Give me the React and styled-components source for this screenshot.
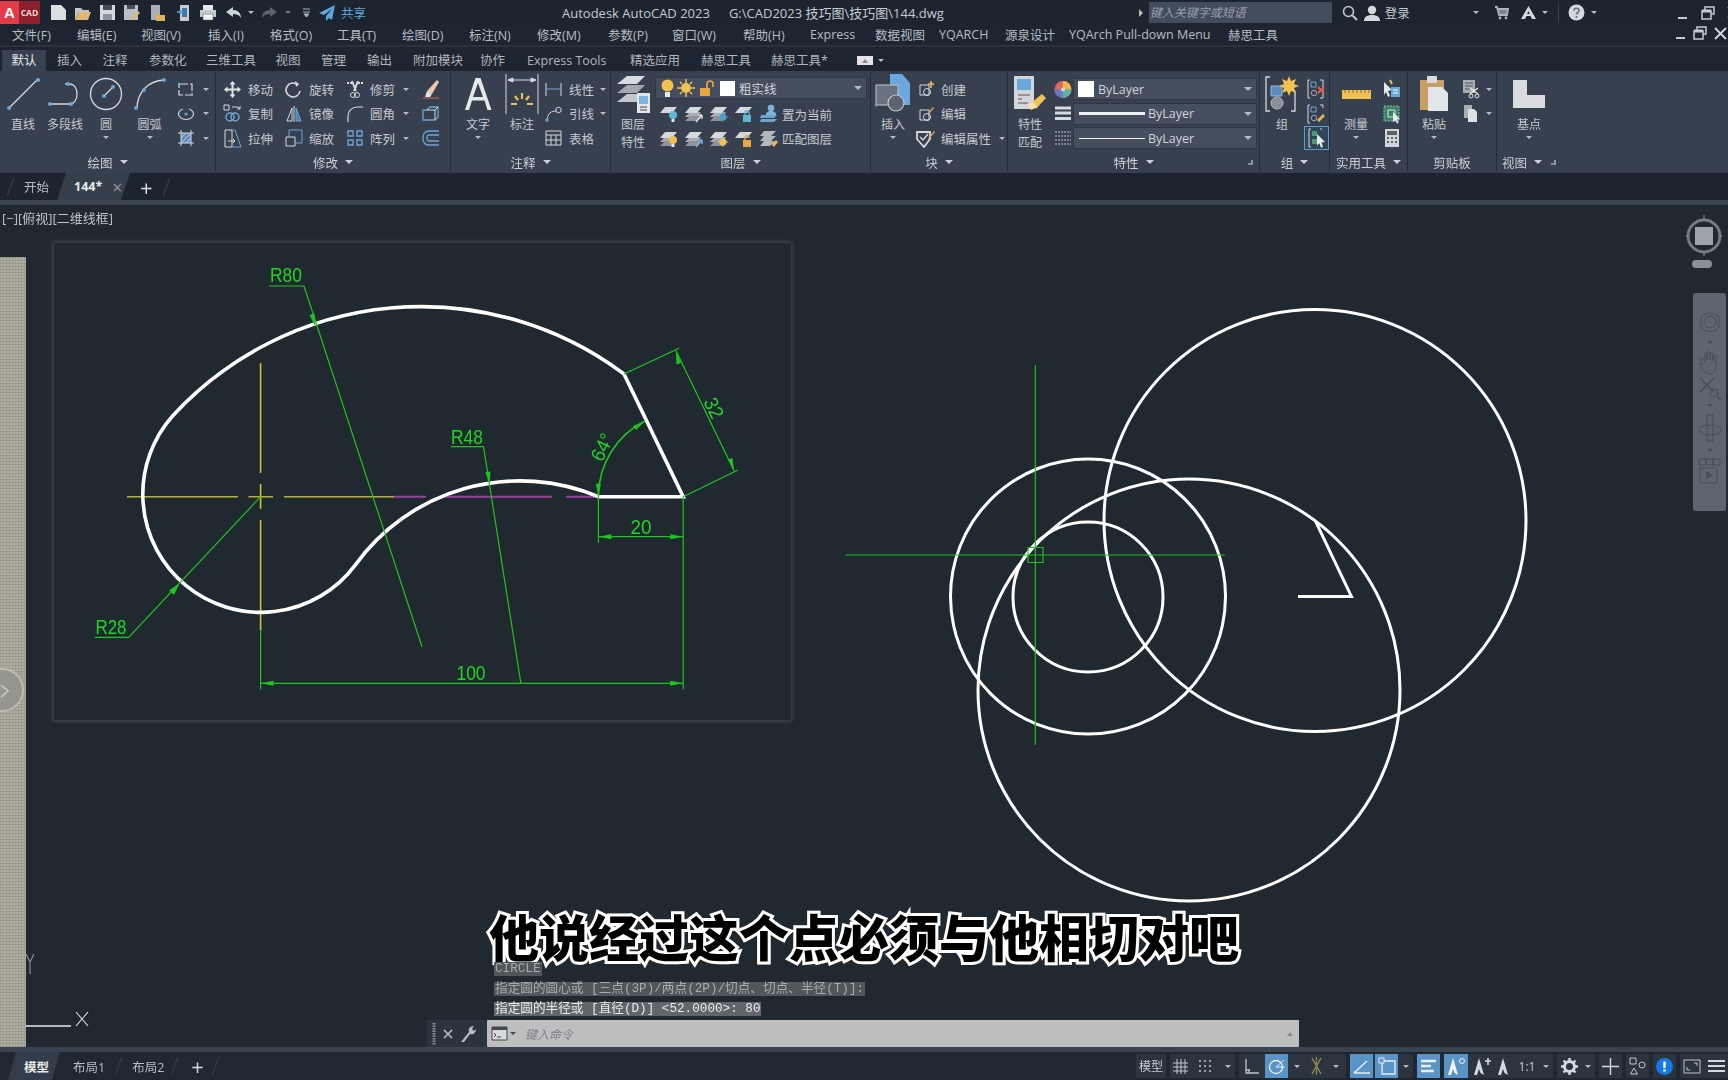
import React from 'react';
import styled, { createGlobalStyle } from 'styled-components';

const GlobalStyle = createGlobalStyle`
  html, body { margin: 0; padding: 0; background: #212930; }
  * { box-sizing: border-box; }
  #root { width: 1728px; height: 1080px; overflow: hidden; }
`;

const UI_FONT = `"Open Sans", "Noto Sans CJK SC", sans-serif`;
const W = '#d6d9dd';
const G = '#9ea4ab';
const B = '#6ea6d6';
const Y = '#efc056';

const Shell = styled.div`
  width: 1728px;
  height: 1080px;
  display: flex;
  flex-direction: column;
  background: #1d2530;
  color: #c6cad0;
  font-family: ${UI_FONT};
  font-size: 12px;
  filter: blur(0.4px);
`;

const Glyph = styled.svg`
  display: block;
  flex: none;
`;

const ico = (w, h, body, fill = 'none') => () => (
  <Glyph width={w} height={h} viewBox={`0 0 ${w} ${h}`} fill={fill}>
    {body}
  </Glyph>
);

/* ---------- title bar ---------- */
const TitleBar = styled.div`
  height: 25px;
  display: flex;
  align-items: center;
  position: relative;
  background: #1c2430;
`;
const Logo = styled.div`
  width: 40px;
  height: 23px;
  flex: none;
  display: flex;
  align-items: center;
  background: #8e1f2b;
  border-radius: 2px 0 0 2px;
`;
const LogoA = styled.span`
  width: 19px;
  height: 23px;
  line-height: 23px;
  text-align: center;
  background: #e23a48;
  color: #fff;
  font-size: 15px;
  font-weight: 700;
  font-family: "Liberation Sans", sans-serif;
`;
const LogoCad = styled.span`
  flex: 1;
  text-align: center;
  color: #f0d5d5;
  font-size: 8.5px;
  font-weight: 700;
`;
const Quick = styled.div`
  display: flex;
  flex: none;
  align-items: center;
  margin-left: ${(p) => p.$ml ?? 0}px;
`;
const ShareText = styled.span`
  margin-left: 5px;
  color: #5ea4d8;
  font-size: 12.5px;
  white-space: nowrap;
`;
const AppTitle = styled.span`
  flex: none;
  margin-left: ${(p) => p.$ml}px;
  font-size: 13px;
  color: #c6cad0;
  white-space: nowrap;
`;
const SearchArrow = styled.span`
  flex: none;
  width: 0;
  height: 0;
  margin-left: ${(p) => p.$ml}px;
  border-top: 4px solid transparent;
  border-bottom: 4px solid transparent;
  border-left: 4px solid #b8bcc2;
`;
const SearchBox = styled.div`
  flex: none;
  width: 183px;
  height: 21px;
  margin-left: 6px;
  padding-left: 1px;
  background: #424c5b;
  color: #97a0ab;
  font-size: 12px;
  font-style: italic;
  line-height: 21px;
  white-space: nowrap;
`;
const Login = styled.span`
  flex: none;
  margin-left: 4px;
  font-size: 12.5px;
  color: #c6cad0;
  white-space: nowrap;
`;
const Sep = styled.span`
  flex: none;
  width: 1px;
  height: 20px;
  background: #3b4450;
  margin-left: ${(p) => p.$ml}px;
`;
const Caret = styled.span`
  display: inline-block;
  flex: none;
  width: 0;
  height: 0;
  border-left: ${(p) => p.$s ?? 3}px solid transparent;
  border-right: ${(p) => p.$s ?? 3}px solid transparent;
  border-top: ${(p) => p.$s ?? 3}px solid ${(p) => p.$c ?? '#b8bcc2'};
  margin-left: ${(p) => p.$ml ?? 0}px;
`;
const CaretUp = styled(Caret)`
  border-top: none;
  border-bottom: 4px solid #8a8a8a;
`;
const NavCaret = styled(Caret)`
  margin: ${(p) => p.$m};
`;

/* ---------- menu + tabs ---------- */
const MenuBar = styled.div`
  height: 22px;
  display: flex;
  align-items: center;
  position: relative;
  padding-left: 12px;
  padding-bottom: 2px;
  border-bottom: 2px solid #2a323d;
`;
const MenuItem = styled.span`
  width: ${(p) => p.$w}px;
  flex: none;
  white-space: nowrap;
  color: #b8bcc3;
  font-size: 12.5px;
`;
const DocControls = styled.div`
  position: absolute;
  right: 1px;
  top: 1px;
  display: flex;
  align-items: center;
  gap: 7px;
`;
const TabStrip = styled.div`
  height: 24px;
  display: flex;
  align-items: flex-end;
  padding-left: 2px;
`;
const RibbonTab = styled.div`
  width: ${(p) => p.$w}px;
  flex: none;
  height: 21px;
  line-height: 21px;
  text-align: ${(p) => (p.$active ? 'center' : 'left')};
  background: ${(p) => (p.$active ? '#37414f' : 'transparent')};
  color: ${(p) => (p.$active ? '#e6e8ea' : '#b0b5bc')};
  font-size: 12.5px;
  white-space: nowrap;
  margin-right: ${(p) => (p.$active ? 11 : 0)}px;
`;
const MiniBox = styled.span`
  width: 16px;
  height: 9px;
  flex: none;
  background: #e3e5e8;
  margin-bottom: 6px;
  display: flex;
  align-items: center;
  justify-content: center;
`;
const TabCaret = styled(Caret)`
  margin-bottom: 9px;
  margin-left: 5px;
`;

/* ---------- ribbon ---------- */
const Ribbon = styled.div`
  height: 102px;
  display: flex;
  background: #37404e;
`;
const Panel = styled.section`
  width: ${(p) => (p.$w ? `${p.$w}px` : 'auto')};
  flex: ${(p) => (p.$w ? 'none' : 1)};
  display: flex;
  flex-direction: column;
  border-right: ${(p) => (p.$last ? 'none' : '1px solid #242c37')};
  margin: 1px 0;
`;
const PanelBody = styled.div`
  height: 80px;
  display: flex;
`;
const PanelFoot = styled.div`
  height: 20px;
  display: flex;
  align-items: center;
  justify-content: ${(p) => (p.$left ? 'flex-start' : 'center')};
  padding-left: ${(p) => p.$pl ?? 0}px;
  position: relative;
  font-size: 12.5px;
  color: #cdd0d5;
`;
const Launcher = styled.span`
  position: absolute;
  right: ${(p) => p.$r ?? 6}px;
  top: 8px;
  width: 5px;
  height: 5px;
  border-right: 2px solid #8d939a;
  border-bottom: 2px solid #8d939a;
`;
const LargeTool = styled.div`
  width: ${(p) => p.$w}px;
  margin-left: ${(p) => p.$ml ?? 0}px;
  flex: none;
  display: flex;
  flex-direction: column;
  align-items: center;
`;
const IconSlot = styled.div`
  height: 44px;
  display: flex;
  align-items: center;
  justify-content: center;
`;
const ToolLabel = styled.div`
  height: ${(p) => p.$h ?? 17}px;
  line-height: ${(p) => p.$h ?? 17}px;
  font-size: 12px;
  color: #c6cad0;
  white-space: nowrap;
`;
const ToolCaret = styled(Caret)`
  margin-top: 3px;
`;
const SmallCol = styled.div`
  display: flex;
  flex-direction: column;
  padding-top: 5px;
  margin-left: ${(p) => p.$ml ?? 0}px;
  width: ${(p) => (p.$w ? `${p.$w}px` : 'auto')};
`;
const SmallRow = styled.div`
  height: 24.5px;
  display: flex;
  align-items: center;
  gap: ${(p) => p.$gap ?? 0}px;
  padding-left: ${(p) => p.$pl ?? 0}px;
  white-space: nowrap;
`;
const IconCell = styled.span`
  width: ${(p) => p.$w ?? 22}px;
  height: ${(p) => p.$h ?? 22}px;
  flex: none;
  display: flex;
  align-items: center;
  justify-content: center;
  border: ${(p) => (p.$on ? '1px solid #5f9ad0' : 'none')};
  background: ${(p) => (p.$on ? '#2f4658' : 'transparent')};
`;
const SmallLabel = styled.span`
  margin-left: ${(p) => p.$ml ?? 5}px;
  font-size: 12.5px;
  color: #c6cad0;
`;
const Combo = styled.div`
  width: ${(p) => p.$w}px;
  height: 22px;
  flex: none;
  display: flex;
  align-items: center;
  background: #444e5e;
  border-radius: 1px;
  box-shadow: inset 0 0 0 1px #2f3743;
  padding: 0 5px;
  margin-bottom: ${(p) => p.$mb ?? 0}px;
  color: #d0d3d8;
  font-size: 12.5px;
`;
const Swatch = styled.span`
  width: ${(p) => p.$s ?? 15}px;
  height: ${(p) => p.$s ?? 15}px;
  margin-left: ${(p) => p.$ml ?? 0}px;
  background: #fff;
  flex: none;
`;
const LineSample = styled.span`
  width: 66px;
  height: ${(p) => p.$t}px;
  background: #f1f2f3;
  margin-left: 1px;
  flex: none;
`;
const ComboText = styled.span`
  margin-left: ${(p) => p.$ml ?? 4}px;
  flex: 1;
`;

/* ---------- doc tabs ---------- */
const DocTabs = styled.div`
  height: 27px;
  display: flex;
  align-items: center;
  position: relative;
  background: #1c2430;
`;
const Slash = styled.span`
  width: 1px;
  height: 18px;
  flex: none;
  background: #3a434f;
  transform: skewX(-20deg);
  margin-left: ${(p) => p.$ml}px;
`;
const DocLabel = styled.span`
  margin-left: ${(p) => p.$ml}px;
  color: ${(p) => p.$c ?? '#b8bcc3'};
  font-size: 12.5px;
  font-weight: ${(p) => p.$b ?? 400};
`;
const ActiveDoc = styled.div`
  width: ${(p) => p.$w}px;
  height: 27px;
  margin-left: ${(p) => p.$ml}px;
  padding-left: ${(p) => p.$pl}px;
  background: #353e4b;
  clip-path: polygon(9px 0, 100% 0, calc(100% - 9px) 100%, 0 100%);
  display: flex;
  align-items: center;
  color: #e6e8ea;
  font-weight: 700;
  font-size: 12.5px;
`;
const CloseX = styled.span`
  margin-left: 10px;
  color: #8f959c;
  font-size: 18px;
  font-weight: 400;
`;
const PlusMark = styled.span`
  margin-left: ${(p) => p.$ml}px;
  color: #d6d9dd;
  font-size: 22px;
  line-height: 22px;
  font-weight: 400;
`;
const Divider = styled.div`
  height: 5px;
  background: #3a4450;
`;

/* ---------- canvas ---------- */
const Canvas = styled.div`
  flex: 1;
  position: relative;
  overflow: hidden;
  background: #212930;
`;
const ViewLabel = styled.div`
  position: absolute;
  left: 2px;
  top: 3px;
  font-size: 13px;
  color: #c0c4ca;
`;
const PhotoStrip = styled.div`
  position: absolute;
  left: 0;
  top: 52px;
  bottom: 0;
  width: 26px;
  background:
    repeating-linear-gradient(0deg, rgba(90, 88, 75, 0.18) 0 1px, transparent 1px 3px),
    repeating-linear-gradient(90deg, rgba(90, 88, 75, 0.14) 0 1px, transparent 1px 3px),
    #aeaca0;
`;
const Knob = styled.div`
  position: absolute;
  left: -20px;
  top: 463px;
  width: 44px;
  height: 44px;
  border-radius: 50%;
  background: #97968c;
  border: 2px solid #bdbcb1;
`;
const KnobMark = styled.svg`
  position: absolute;
  left: 0;
  top: 479px;
`;
const Sheet = styled.div`
  position: absolute;
  left: 54px;
  top: 38px;
  width: 737px;
  height: 477px;
  box-shadow: 0 0 4px 1px #444d58;
`;
const Drawing = styled.svg`
  position: absolute;
  left: 0;
  top: 0;
`;
const DimText = styled.text`
  font-family: "Liberation Sans", sans-serif;
  font-size: 20px;
  fill: #22d422;
  text-anchor: middle;
  dominant-baseline: central;
`;
const ViewCube = styled.div`
  position: absolute;
  left: 1685px;
  top: 8px;
  opacity: 0.75;
`;
const NavPill = styled.div`
  position: absolute;
  left: 1692px;
  top: 55px;
  width: 20px;
  height: 8px;
  border-radius: 4px;
  background: #8a9097;
`;
const NavBar = styled.div`
  position: absolute;
  left: 1693px;
  top: 88px;
  width: 33px;
  height: 218px;
  border-radius: 3px;
  background: #5d656e;
  display: flex;
  flex-direction: column;
  align-items: center;
  padding-top: 18px;
`;
const Subtitle = styled.div`
  position: absolute;
  left: 0;
  right: 0;
  top: 694px;
  text-align: center;
  font-family: "Noto Sans CJK SC", sans-serif;
  font-size: 50px;
  line-height: 72px;
  font-weight: 900;
  color: #000;
  -webkit-text-stroke: 6px #fff;
  paint-order: stroke fill;
  white-space: nowrap;
`;
const History = styled.div`
  position: absolute;
  left: 494px;
  top: 757px;
  display: flex;
  flex-direction: column;
  align-items: flex-start;
  font-family: "Liberation Mono", "Noto Sans CJK SC", monospace;
  font-size: 12.65px;
`;
const HistoryLine = styled.span`
  height: ${(p) => p.$h ?? 14}px;
  line-height: ${(p) => p.$h ?? 14}px;
  margin-bottom: ${(p) => p.$mb ?? 6}px;
  padding: 0 1px;
  background: ${(p) => (p.$dim ? '#50565a' : '#62666b')};
  color: ${(p) => (p.$dim ? '#a8acae' : '#e8e9ea')};
  white-space: pre;
`;
const CommandWrap = styled.div`
  position: absolute;
  left: 427px;
  top: 815px;
  width: 872px;
  height: 27px;
  display: flex;
  background: #2b333e;
`;
const CommandGrip = styled.div`
  width: 60px;
  display: flex;
  align-items: center;
  padding-left: 5px;
  gap: 7px;
`;
const CommandField = styled.div`
  flex: 1;
  display: flex;
  align-items: center;
  background: #bdbec0;
  padding: 0 6px 0 4px;
  border-radius: 1px;
  color: #7e8185;
  font-style: italic;
  font-size: 12px;
`;
const Hint = styled.span`
  margin-left: 9px;
  flex: 1;
`;

/* ---------- status bar ---------- */
const StatusBar = styled.div`
  height: 28px;
  display: flex;
  align-items: center;
  justify-content: space-between;
  background: #1f2732;
`;
const LayoutTabs = styled.div`
  display: flex;
  align-items: center;
  height: 28px;
`;
const ModelTab = styled.div`
  width: 52px;
  height: 28px;
  margin-left: 8px;
  padding-left: 16px;
  background: #333c49;
  clip-path: polygon(8px 0, 100% 0, calc(100% - 8px) 100%, 0 100%);
  display: flex;
  align-items: center;
  color: #e6e8ea;
  font-size: 12.5px;
  font-weight: 700;
`;
const StatusTools = styled.div`
  display: flex;
  height: 24px;
  gap: 4px;
`;
const StatusGroup = styled.div`
  display: flex;
  align-items: center;
  background: #2c3440;
`;
const StatusCell = styled.span`
  width: ${(p) => p.$w ?? 23}px;
  height: 24px;
  flex: none;
  display: flex;
  align-items: center;
  justify-content: center;
  margin-left: ${(p) => p.$ml ?? 0}px;
  background: ${(p) => (p.$on ? '#5a94c6' : 'transparent')};
  color: #c6cad0;
  font-size: 12px;
`;

/* ---------- icons ---------- */
const dot = (x, y, r = 2) => <circle cx={x} cy={y} r={r} fill={B} />;
const IDoc = ico(17, 17, <path d="M1 1h10l5 5v10H1z" fill="#dcdfe2" />);
const IFolder = ico(18, 16, <><path d="M1 3h6l2 2h6v2H5L1 15z" fill="#c2c6cb" /><path d="M5 7h12l-3 8H1z" fill="#e2b878" /></>);
const ISave = ico(17, 17, <><path d="M1 1h15v15H1z" fill="#d5d8dc" /><path d="M4 1h9v5H4z" fill="#434b57" /><path d="M4 10h9v6H4z" fill="#8c929a" /></>);
const ISaveAs = ico(18, 17, <><path d="M1 1h14v15H1z" fill="#b9bec4" /><path d="M4 1h8v4H4z" fill="#434b57" /><path d="M8 15l7-8 2 2-7 7z" fill="#e4b55f" /></>);
const IDocFolder = ico(17, 18, <><path d="M2 1h9v15H2z" fill="#aab0b7" /><path d="M7 10h3l1 1h5v6H7z" fill="#e2b05a" /></>);
const IPhone = ico(15, 18, <><path d="M4 1h9v16H4z" fill="#c8ccd1" /><path d="M6 4h5v9H6z" fill="#3f78a8" /><path d="M1 8h5M4 6l2 2-2 2" stroke={B} strokeWidth="1.5" /></>);
const IPrint = ico(18, 17, <><path d="M4 1h10v5H4z" fill="#e4e6e9" /><path d="M1 6h16v7H1z" fill="#c5c9ce" /><path d="M4 10h10v6H4z" fill="#f1f2f3" stroke="#555" strokeWidth=".5" /></>);
const IUndo = ico(17, 13, <path d="M1 6l7-5v3c5 0 8 3 8 8-2-3-4-4-8-4v3z" fill="#cfd3d7" />);
const IRedo = ico(17, 13, <path d="M16 6L9 1v3C4 4 1 7 1 12c2-3 4-4 8-4v3z" fill="#5a6370" />);
const ILines = ico(9, 10, <path d="M1 1h7M1 4h7M2 6l2.5 3L7 6z" stroke="#aab0b6" fill="#aab0b6" />);
const IPlane = ico(17, 16, <path d="M16 0L0 8l5 2 8-6-6 7v5l3-3 3 2z" fill="#5ea4d8" />);
const ISearchBtn = ico(16, 16, <><circle cx="6.5" cy="6.5" r="5" stroke="#c2c6cb" strokeWidth="1.6" /><path d="M10.5 10.5L15 15" stroke="#c2c6cb" strokeWidth="2" /></>);
const IUser = ico(18, 16, <><circle cx="9" cy="5" r="4.2" fill="#d5d8dc" /><path d="M1 16c0-4 3-6 8-6s8 2 8 6z" fill="#d5d8dc" /></>);
const ICart = ico(15, 15, <><path d="M1 2h2l2 8h8l1-6H4" stroke="#aeb3b9" strokeWidth="1.8" fill="#7d848c" /><circle cx="6" cy="13" r="1.4" fill="#aeb3b9" /><circle cx="12" cy="13" r="1.4" fill="#aeb3b9" /></>);
const IAuto = ico(17, 15, <path d="M8.5 1L1 14h4l1.5-3h4L12 14h4zM8.5 6l1.2 3H7.2z" fill="#d5d8dc" />);
const IHelp = () => (
  <Glyph width={17} height={17} viewBox="0 0 17 17">
    <circle cx="8.5" cy="8.5" r="8" fill="#d5d8dc" />
    <path d="M6 6.5c0-3 5-3 5 0 0 2-2.5 2-2.5 4M8.5 12v2" stroke="#6a7079" strokeWidth="1.7" fill="none" />
  </Glyph>
);
const IMin = ico(11, 12, <path d="M1 11h9" stroke="#c6cad0" strokeWidth="2" />);
const IRestore = ico(14, 14, <><path d="M4 4V1h9v7h-3" stroke="#c6cad0" strokeWidth="1.5" /><path d="M1 5h9v8H1z" stroke="#c6cad0" strokeWidth="1.5" /><path d="M1 5h9" stroke="#c6cad0" strokeWidth="3" /></>);
const IClose = ico(13, 13, <path d="M1 1l11 11M12 1L1 12" stroke="#d6d9dd" strokeWidth="1.8" />);

const ILine = ico(36, 36, <><path d="M4 32L33 3" stroke={W} strokeWidth="1.3" />{dot(4, 32)}{dot(33, 4)}</>);
const IPline = ico(42, 28, <><path d="M7 24h21M21 4h4c5 0 8 4 8 10s-3 10-8 10" stroke={W} strokeWidth="1.3" />{dot(6, 24)}{dot(27, 24)}{dot(24, 4)}</>);
const ICircleTool = ico(36, 36, <><circle cx="18" cy="18" r="15.5" stroke={W} strokeWidth="1.3" /><path d="M16 20l8-8" stroke={W} strokeWidth="1.3" />{dot(16, 20)}{dot(25, 11)}</>);
const IArcTool = ico(34, 36, <><path d="M4 33C4 16 15 5 31 4" stroke={W} strokeWidth="1.3" />{dot(3, 32)}{dot(11, 14)}{dot(31, 4)}</>);
const IRect = ico(18, 15, <><path d="M2 2h13v11H2z" stroke={W} strokeDasharray="9 2" strokeWidth="1.2" />{dot(2, 2, 1.2)}{dot(15, 13, 1.2)}</>);
const IEllipse = ico(18, 14, <><ellipse cx="9" cy="7" rx="7.5" ry="5.5" stroke={W} strokeWidth="1.2" />{dot(9, 7, 1.6)}<path d="M6 1.5h6" stroke="#37404e" strokeWidth="2" /></>);
const IHatch = ico(18, 18, <><path d="M4 4h10v10H4z" fill="#5f8dc0" /><path d="M4 14L14 4M4 9l5-5M9 14l5-5" stroke="#b9cbe0" /><path d="M1 4h16M1 14h16M4 1v16M14 1v16" stroke={W} /></>);
const IMove = ico(19, 19, <path d="M9.5 1l3 3.5h-2v4h4v-2l3.5 3-3.5 3v-2h-4v4h2l-3 3.5-3-3.5h2v-4h-4v2L1 9.5l3.5-3v2h4v-4h-2z" fill="#e2e4e7" />);
const ICopy = ico(19, 19, <><path d="M1 1h5v5H1z" stroke={W} /><path d="M9 3h6l2 2M17 2v3h-3" stroke={W} /><circle cx="7" cy="13" r="4" stroke={B} strokeWidth="1.5" /><circle cx="12" cy="13" r="4" stroke={B} strokeWidth="1.5" /></>);
const IStretch = ico(18, 19, <><path d="M1 1h7v17H1z" stroke={W} /><path d="M8 1h3l6 17H8" stroke={B} /><path d="M4 12h7M9 10l2 2-2 2" stroke={W} /></>);
const IRotate = ico(17, 19, <><path d="M13 5A7 7 0 1 0 15 11" stroke={W} strokeWidth="1.6" /><path d="M10 1l4 3-3 3z" fill={W} /></>);
const IMirror = ico(18, 18, <><path d="M9 1v16" stroke={W} /><path d="M7 3L2 16h5z" stroke={W} /><path d="M11 3l5 13h-5z" stroke={B} fill="#4f7fa8" /></>);
const IScale = ico(18, 18, <><path d="M1 8h9v9H1z" stroke={W} /><path d="M4 8V1h13v13h-7" stroke={B} /></>);
const ITrim = ico(18, 19, <><path d="M1 3h5M12 3h5" stroke={W} strokeDasharray="2 1" strokeWidth="2" /><path d="M6 1l4 10M12 1L8 11" stroke={W} strokeWidth="2" /><circle cx="7" cy="15" r="2.5" stroke={W} /><circle cx="11" cy="15" r="2.5" stroke={W} /></>);
const IFillet = ico(18, 18, <path d="M2 17V11C2 6 6 2 11 2h6" stroke={W} strokeWidth="1.2" />);
const IArray = ico(18, 18, <path d="M2 2h5v5H2zM11 2h5v5h-5zM2 11h5v5H2zM11 11h5v5h-5z" stroke={B} strokeWidth="1.3" />);
const IErase = ico(18, 20, <><path d="M15 1l2 2-7 12-5-3z" fill="#f0c9a8" /><path d="M5 12l5 3-2 3H3z" fill="#e2e4e7" /><path d="M1 19h16" stroke="#d96b5a" /></>);
const IExplode = ico(18, 18, <><path d="M5 5l3-3h8v10l-3 3H1V5z" stroke={B} strokeWidth="1.3" /><path d="M5 5h8v10M13 5l3-3" stroke={W} /></>);
const IOffset = ico(18, 16, <path d="M17 1H7C3 1 1 4 1 8s2 7 6 7h10M17 5H7C5 5 5 6 5 8s0 3 2 3h10" stroke={B} strokeWidth="1.3" />);
const ITextA = ico(30, 34, <path d="M12.5 1h5l11 32h-4l-3-9.5H9L6 33H2zM15 6l-5 14h10z" fill="#e6e8ea" />);
const IDim = ico(34, 42, <><path d="M1 1v40M33 1v40" stroke={W} /><path d="M3 7h28M3 7l5-2v4zM31 7l-5-2v4z" stroke={W} fill={W} /><path d="M17 20v6M10 23l3 4M24 23l-3 4M6 31h6M22 31h6" stroke={Y} strokeWidth="2.2" /></>);
const ILinear = ico(17, 15, <><path d="M1 1v13M16 1v13" stroke={W} /><path d="M2 7h13" stroke={B} /></>);
const ILeader = ico(18, 16, <><path d="M2 14c1-7 4-9 9-9" stroke={W} /><circle cx="13.5" cy="4" r="2.7" stroke={W} />{dot(2, 14, 1.7)}</>);
const ITable = ico(17, 16, <path d="M1 1h15v14H1zM1 5h15M1 10h15M6 5v10M11 5v10" stroke={W} />);

const ILayers = ico(36, 38, <>
  <path d="M12 1h18l-8 8H2z" fill="#d8dadd" />
  <path d="M12 10h18l-8 8H2z" fill="#a5a9af" />
  <path d="M12 19h18l-8 8H2z" fill="#c4c7cb" />
  <path d="M22 18h13v20H22z" fill="#e3e5e8" />
  <path d="M24 21h9v8h-9z" fill="#7fb3dd" />
  <path d="M25 32h7M25 35h7" stroke="#444" />
</>);
const IBulb = ico(13, 19, <><circle cx="6.5" cy="6.5" r="6" fill="#f2c14f" /><path d="M4 13h5v5H4z" fill="#e8e8e8" /></>);
const ISun = ico(18, 18, <><circle cx="9" cy="9" r="5" fill="#f2c14f" /><path d="M9 0v4M9 14v4M0 9h4M14 9h4M3 3l2 2M13 13l2 2M15 3l-2 2M5 13l-2 2" stroke="#f2c14f" strokeWidth="1.5" /></>);
const ILockOpen = ico(15, 17, <><path d="M1 8h10v8H1z" fill="#e8a640" /><path d="M8 8V4c0-4 6-4 6 0v3" stroke="#e8a640" strokeWidth="1.7" /></>);

const layerChip = (overlay, n = 1) => ico(20, 20, <>
  {n > 1 && <path d="M6 8h11l-4 5H1z" fill="#a8acb1" />}
  {n > 1 && <path d="M6 12h11l-4 5H1z" fill="#8f949b" />}
  <path d="M6 3h12l-5 6H1z" fill="#d5d8dc" />
  {overlay}
</>);
const OBulb = <><circle cx="14" cy="11" r="4" fill="#5fb6d6" /><path d="M12.5 15h3v3h-3z" fill="#e8e8e8" /></>;
const OArrow = <path d="M12 18l6-7M18 11v4M18 11h-4" stroke="#dfe2e5" strokeWidth="1.4" />;
const OArrowB = <path d="M12 18l6-7M18 11v4M18 11h-4" stroke="#7fb3dd" strokeWidth="1.4" />;
const OSun = <><circle cx="14" cy="13" r="3.5" fill="#4f9fc0" /><path d="M14 8v10M9 13h10" stroke="#4f9fc0" /></>;
const OSunY = <><circle cx="14" cy="13" r="3.5" fill={Y} /><path d="M14 8v10M9 13h10" stroke={Y} /></>;
const OBulbY = <><circle cx="14" cy="11" r="4" fill={Y} /><path d="M12.5 15h3v3h-3z" fill="#e8e8e8" /></>;
const OLockB = <><path d="M9 11h8v7H9z" fill="#5fb6d6" /><path d="M11 11V9c0-3 4-3 4 0v2" stroke="#5fb6d6" strokeWidth="1.3" /></>;
const OLockY = <><path d="M9 11h8v7H9z" fill="#e8a640" /><path d="M11 11V9c0-3 4-3 4 0" stroke="#e8a640" strokeWidth="1.3" /></>;
const L1 = layerChip(OBulb);
const L2 = layerChip(OArrow, 2);
const L3 = layerChip(OSun, 2);
const L4 = layerChip(OLockB);
const L5 = layerChip(OBulbY, 2);
const L6 = layerChip(OArrowB, 2);
const L7 = layerChip(OSunY, 2);
const L8 = layerChip(OLockY);
const ICurrent = ico(20, 20, <><circle cx="12" cy="4" r="3.3" fill="#7fb3dd" /><path d="M7 11c0-3 2-4 5-4s5 1 5 4z" fill="#7fb3dd" /><path d="M2 11h16l-3 3H1zM2 15h16l-3 3H1z" fill="#6fa4cf" /></>);
const IMatchLayer = ico(20, 20, <><path d="M5 2h12l-5 5H1zM5 7h12l-5 5H1zM5 12h10l-4 5H1z" fill="#b3b7bc" /><path d="M12 15l5-4 2 2-4 5z" fill="#e4b55f" /></>);

const IInsert = ico(36, 42, <>
  <path d="M15 1h12l8 9v22H15z" fill="#6ba8e0" />
  <path d="M1 12h22v20H1z" fill="#6c7380" stroke="#c2c6cb" />
  <circle cx="21" cy="30" r="8" fill="#5d6470" stroke="#c2c6cb" strokeWidth="1.2" />
  {dot(1, 32, 1.5)}
</>);
const IBlockNew = ico(18, 18, <><path d="M3 5h9v10H3z" stroke={W} /><circle cx="10" cy="12" r="3.5" stroke={W} /><path d="M14 1v7M11 4h6" stroke={Y} strokeWidth="1.5" /></>);
const IBlockEdit = ico(18, 18, <><path d="M3 5h9v10H3z" stroke={W} /><circle cx="10" cy="12" r="3.5" stroke={W} /><path d="M11 8l5-6 1 1-5 6z" fill="#e4a860" /></>);
const IAttr = ico(20, 19, <><path d="M1 3h13v7l-6 8-7-8z" stroke={W} strokeWidth="1.8" /><path d="M4 8l3 3 5-6" stroke={W} strokeWidth="1.5" /><path d="M12 9l6-7 1 1-6 7z" fill="#e4a860" /></>);
const IMatch = ico(34, 38, <>
  <path d="M1 1h20v33H1z" fill="#d2d5d9" />
  <path d="M4 4h14v11H4z" fill="#6aa8dc" />
  <path d="M5 20h12M5 24h4M5 28h10" stroke="#555" />
  <path d="M18 28l11-9 4 4-10 11z" fill="#f0c25a" />
  <path d="M15 30l5-3 4 5-6 3z" fill="#f3e2b0" />
</>);
const IWheel = () => (
  <Glyph width={18} height={19} viewBox="0 0 18 19">
    <circle cx="9" cy="9.5" r="8.5" fill="#e0675a" />
    <path d="M9 9.5V1a8.5 8.5 0 0 1 8.5 8.5z" fill="#f0b64a" />
    <path d="M9 9.5h8.5A8.5 8.5 0 0 1 9 18z" fill="#5cb4a6" />
    <path d="M9 9.5V18A8.5 8.5 0 0 1 .5 9.5z" fill="#6a78c8" />
    <circle cx="9" cy="9.5" r="2" fill="#d8d8d8" />
  </Glyph>
);
const IWeight = ico(16, 16, <path d="M0 2h16M0 7h16M0 12.5h16" stroke="#d5d8dc" strokeWidth="3" />);
const IDash = ico(16, 16, <path d="M0 2h16M0 6h16M0 10h16M0 14h16" stroke="#c2c6cb" strokeDasharray="2 1" />);
const IGroup = ico(34, 38, <>
  <path d="M5 2H1v34h4M26 36h4V16" stroke={W} strokeWidth="1.3" />
  <path d="M6 11h11v10H6z" fill="#5a8dbe" stroke="#8ab8df" />
  <circle cx="12" cy="28" r="6" fill="#8b9097" stroke="#b5b9be" />
  <path d="M24 1l2 5 5-2-2 5 5 2-5 2 2 5-5-2-2 5-2-5-5 2 2-5-5-2 5-2-2-5 5 2z" fill="#f2c14f" />
</>);
const IUngroup = ico(18, 20, <><path d="M3 1H1v18h2M13 1h3v18h-3" stroke={W} /><path d="M4 3h5v5H4z" stroke={B} /><circle cx="7" cy="14" r="2.7" stroke={G} /><path d="M11 8l6 6M17 8l-6 6" stroke="#d85a5a" strokeWidth="2.2" /></>);
const IGroupEdit = ico(18, 20, <><path d="M3 1H1v18h2M13 1h3v3" stroke={W} /><path d="M4 3h5v5H4z" stroke={B} /><circle cx="7" cy="14" r="2.7" stroke={G} /><path d="M10 16l6-6 2 2-6 6z" fill="#e4b55f" /></>);
const IGroupSel = ico(18, 20, <><path d="M3 1H1v18h2M12 1h2" stroke={W} /><path d="M4 3h5v5H4z" fill="#4e9a78" /><path d="M4 11h5v5H4z" fill="#4e9a78" /><path d="M9 6l8 8-3.5.5L15 19l-2 .7-1.6-4.4L9 17.5z" fill="#e8eaec" /></>);
const IRuler = ico(31, 11, <><path d="M1 1h29v9H1z" fill="#efc056" /><path d="M4 1v3M8 1v3M12 1v3M16 1v3M20 1v3M24 1v3M28 1v3" stroke="#8a6a1e" /></>);
const IQuick = ico(18, 20, <><path d="M1 3l8 8-4 1 2 5-2 1-2-5-2 3z" fill="#e6e8ea" /><path d="M8 8h9v10H8z" fill="#6aa8dc" /><path d="M10 11h5M10 14h5" stroke="#fff" /><path d="M7 1l2 4" stroke={Y} strokeWidth="2" /></>);
const ISelectAll = ico(18, 20, <><path d="M1 2h15v15H1z" fill="#3e7f68" stroke="#6ec09b" strokeDasharray="2 1" /><path d="M5 6h7v7H5z" stroke="#cfe7dc" /><path d="M10 8l7 7-3 .5 1.5 3.5-1.5.7-1.5-3.5L10 18z" fill="#e8eaec" /></>);
const ICalc = ico(14, 18, <><path d="M0 0h14v18H0z" fill="#d2d5d9" /><path d="M2 2h10v4H2z" fill="#5a616b" /><path d="M2 8h2v2H2zM6 8h2v2H6zM10 8h2v2h-2zM2 12h2v2H2zM6 12h2v2H6zM10 12h2v2h-2z" fill="#5a616b" /></>);
const IPaste = ico(30, 38, <>
  <path d="M1 5h24v30H1z" fill="#c99f66" />
  <path d="M8 1h10v7H8z" fill="#d9dbdd" />
  <path d="M9 12h14l6 6v18H9z" fill="#e3e5e8" />
</>);
const ICut = ico(18, 20, <><path d="M1 1h12v13H1z" fill="#a8adb3" /><path d="M3 4h8M3 7h8M3 10h5" stroke="#555" /><path d="M8 9l8 6M16 9l-8 6" stroke="#e6e8ea" strokeWidth="1.3" /><circle cx="9" cy="17" r="2" stroke="#e6e8ea" /><circle cx="15" cy="17" r="2" stroke="#e6e8ea" /></>);
const ICopyClip = ico(15, 19, <><path d="M1 1h8v13H1z" fill="#a8adb3" /><path d="M5 5h6l3 3v10H5z" fill="#dfe1e4" /></>);
const IBase = ico(34, 30, <path d="M1 1h14v15h18v13H1z" fill="#dadcdf" />);

const ILOrtho = ico(16, 17, <path d="M2 1v14h13M5 15v-4M2 12h4" stroke="#c2c6cb" strokeWidth="1.3" />);
const IPolar = ico(18, 18, <><circle cx="8" cy="10" r="6.5" stroke="#e8eef4" strokeWidth="1.3" /><path d="M8 10l8-7M8 10h9" stroke="#e8eef4" /></>);
const IIso = ico(13, 18, <><path d="M2 1l9 16M11 1L2 17" stroke="#b9863f" strokeWidth="1.3" /><path d="M6.5 0v18" stroke="#5e9b5e" strokeWidth="1.3" /></>);
const IAngle = ico(18, 15, <path d="M1 14h16M1 14L14 2" stroke="#e8eef4" strokeWidth="1.5" />);
const IOsnap = ico(18, 18, <><path d="M4 4h13v13H4z" stroke="#e8eef4" strokeWidth="1.3" /><path d="M1 1h5v5H1z" fill="#5a94c6" stroke="#e8eef4" /></>);
const ILW = ico(17, 14, <path d="M1 2h15M1 7h10M1 12h13" stroke="#e8eef4" strokeWidth="2.6" />);
const IAnno = (fill, mark) => ico(19, 19, <><path d="M6 1l5 17-3.5-2L6 12l-2 6H1z" fill={fill} />{mark}</>);
const IAnno1 = IAnno('#eef2f6', <circle cx="15" cy="4" r="2.5" stroke="#eef2f6" />);
const IAnno2 = IAnno('#d5d8dc', <path d="M15 1v7M12 4h6" stroke="#d5d8dc" strokeWidth="1.6" />);
const IAnno3 = IAnno('#d5d8dc', null);
const IGrid = ico(15, 15, <path d="M4 0v15M8 0v15M12 0v15M0 4h15M0 8h15M0 12h15" stroke="#c2c6cb" />);
const IDots = ico(14, 14, <path d="M2 2h.01M7 2h.01M12 2h.01M2 7h.01M7 7h.01M12 7h.01M2 12h.01M7 12h.01M12 12h.01" stroke="#c2c6cb" strokeWidth="2" strokeLinecap="round" />);
const IGear = ico(17, 17, <><circle cx="8.5" cy="8.5" r="5" stroke="#d5d8dc" strokeWidth="3" /><path d="M8.5 0v3M8.5 14v3M0 8.5h3M14 8.5h3M2.5 2.5l2 2M12.5 12.5l2 2M14.5 2.5l-2 2M4.5 12.5l-2 2" stroke="#d5d8dc" strokeWidth="2.4" /></>);
const IPlus = ico(17, 17, <path d="M8.5 0v17M0 8.5h17" stroke="#d5d8dc" strokeWidth="1.4" />);
const IIsolate = ico(17, 18, <><path d="M1 1h6v6H1z" stroke="#c2c6cb" /><circle cx="13" cy="8" r="3" stroke="#c2c6cb" /><path d="M5 11l3.5 6h-7z" stroke="#c2c6cb" /></>);
const IInfo = () => (
  <Glyph width={17} height={17} viewBox="0 0 17 17">
    <circle cx="8.5" cy="8.5" r="8.5" fill="#1479e4" />
    <path d="M8.5 3.5v6.5M8.5 11.5v2" stroke="#fff" strokeWidth="2.4" />
  </Glyph>
);
const IExpand = ico(18, 15, <><path d="M1 1h16v13H1z" stroke="#c2c6cb" /><path d="M11 4h3v3M7 11H4V8" stroke="#c2c6cb" /></>);
const IMenu = ico(17, 14, <path d="M0 2h17M0 7h17M0 12h17" stroke="#d5d8dc" strokeWidth="1.8" />);
const IGrip = ico(4, 22, <path d="M2 0v22" stroke="#8a9097" strokeWidth="3" strokeDasharray="1.5 1" />);
const ICmdClose = ico(10, 10, <path d="M1 1l8 8M9 1L1 9" stroke="#b9bdc2" strokeWidth="1.6" />);
const IWrench = ico(16, 18, <path d="M1 17l8-10c-1-3 1-6 5-6l-2 3 2 2 2-2c0 4-3 6-6 5l-6 8z" fill="#b9bdc2" />);
const ICmdBox = ico(17, 15, <><path d="M1 1h15v13H1z" fill="#d8d9da" stroke="#44484d" /><path d="M1 1h15v3H1z" fill="#44484d" /><path d="M3 7l2 2-2 2M6 11h4" stroke="#44484d" /></>);

const IViewCube = () => (
  <Glyph width={38} height={44} viewBox="0 0 38 44" fill="none">
    <circle cx="19" cy="23" r="16" stroke="#8f959c" strokeWidth="3" />
    <path d="M19 2v5M19 39v4M1 23h3M34 23h3" stroke="#b6bbc1" />
    <path d="M10 14h18v18H10z" fill="#c8ccd2" />
  </Glyph>
);
const INavWheel = ico(22, 24, <><path d="M2 6c5-5 13-5 18 0v10c-4 6-14 6-18 0z" stroke="#474e57" /><circle cx="11" cy="11" r="6" stroke="#474e57" /></>);
const IHand = ico(24, 26, <path d="M5 14L2 10c-1-2 1-3 3-1l2 3V4c0-2 2-2 2 0v6-7c0-2 3-2 3 0v7-6c0-2 3-2 3 0v7-4c0-2 3-2 3 0v8c0 6-2 9-7 9-4 0-6-3-10-10z" stroke="#474e57" />);
const IZoom = ico(24, 26, <><path d="M2 2l14 14M16 2L2 16" stroke="#474e57" strokeWidth="1.5" /><circle cx="16" cy="17" r="4" stroke="#474e57" /><path d="M19 20l4 4" stroke="#474e57" strokeWidth="1.5" /></>);
const IOrbit = ico(24, 30, <><path d="M9 2h6v26H9z" stroke="#474e57" /><ellipse cx="12" cy="17" rx="11" ry="5" stroke="#474e57" /></>);
const IShow = ico(24, 28, <><path d="M1 1h7v6H1zM8 1h7v6H8zM15 1h7v6h-7zM2 10h17v15H2z" stroke="#474e57" /><path d="M8 13l7 4-7 5z" fill="#474e57" /></>);

/* ---------- content data ---------- */
const menus = [
  ['文件(F)', 65], ['编辑(E)', 64], ['视图(V)', 67], ['插入(I)', 62], ['格式(O)', 67], ['工具(T)', 65], ['绘图(D)', 67],
  ['标注(N)', 68], ['修改(M)', 71], ['参数(P)', 64], ['窗口(W)', 71], ['帮助(H)', 67], ['Express', 65], ['数据视图', 64],
  ['YQARCH', 66], ['源泉设计', 64], ['YQArch Pull-down Menu', 159], ['赫思工具', 51],
];
const ribbonTabs = [
  ['插入', 45.5], ['注释', 46.5], ['参数化', 57], ['三维工具', 69.5], ['视图', 45.5], ['管理', 46], ['输出', 46], ['附加模块', 67],
  ['协作', 47], ['Express Tools', 103], ['精选应用', 71], ['赫思工具', 70], ['赫思工具*', 86],
];

const Large = ({ w, ml, icon: Icon, label, caret, lines }) => (
  <LargeTool $w={w} $ml={ml}>
    <IconSlot><Icon /></IconSlot>
    {(lines ?? [label]).map((t) => <ToolLabel key={t} $h={lines ? 18 : 17}>{t}</ToolLabel>)}
    {caret && <ToolCaret />}
  </LargeTool>
);

const Tool = ({ icon: Icon, label, caret, caretMl = 8 }) => (
  <SmallRow>
    <IconCell $w={21}><Icon /></IconCell>
    <SmallLabel>{label}</SmallLabel>
    {caret && <Caret $ml={caretMl} />}
  </SmallRow>
);

const Foot = ({ label, left, pl, children }) => (
  <PanelFoot $left={left} $pl={pl}>
    {label}
    <Caret $s={4} $ml={7} $c="#cdd0d5" />
    {children}
  </PanelFoot>
);

const ProfileDrawing = () => (
  <Drawing width="1728" height="842" viewBox="0 205 1728 842" fill="none">
    {/* center lines */}
    <g stroke="#b8b23a" strokeWidth="1.6">
      <path d="M127 496.7H238M248.5 496.7H273M284 496.7H394" />
      <path d="M260.6 363V473M260.6 484V509M260.6 520V630" stroke="#d0c030" />
    </g>
    <path d="M394 496.7H426M442 496.7H552M566 496.7H597" stroke="#9a3fa0" strokeWidth="2" />

    {/* profile */}
    <path
      d="M624 374A338 338 0 0 0 173 415.5A118 118 0 1 0 355 565.4A203 203 0 0 1 598.4 496.7H683.2L624 374"
      stroke="#fff"
      strokeWidth="3.6"
      strokeLinejoin="miter"
    />

    {/* dimensions */}
    <g stroke="#1fc41f" strokeWidth="1.2">
      <path d="M269 286H304L422 646.7" />
      <path d="M451 446.7H483.5L520.9 683.3" />
      <path d="M94.8 637.3H128.7L260.6 496.7" />
      <path d="M260.6 630V689.5M683.2 496.7V689.5M260.6 683.3H683.2" />
      <path d="M598.4 496.7V542.7M598.4 536.7H683.2" />
      <path d="M624 374L679 348.3M683.2 496.7L738 470M676 350.7L734 470.7" />
      <path d="M598.4 496.7A84.5 84.5 0 0 1 645 421" strokeWidth="1.6" />
    </g>
    <g fill="#1fc41f">
      <path d="M315.5 327L309.5 315L314.5 313.5z" />
      <path d="M489.5 485L485.5 472L490.5 471.5z" />
      <path d="M179.6 583.3L174 595L169 590.5z" />
      <path d="M260.6 683.3l13-2.5v5zM683.2 683.3l-13-2.5v5z" />
      <path d="M598.4 536.7l13-2.5v5zM683.2 536.7l-13-2.5v5z" />
      <path d="M676 350.7l5 12-4.5 2zM734 470.7l-6-11 4.5-2z" />
      <path d="M598.4 496.7l-2.5-13h5zM645 421l-9 9-3-4z" />
    </g>
    <DimText x="286" y="275" textLength="32" lengthAdjust="spacingAndGlyphs">R80</DimText>
    <DimText x="467" y="437" textLength="32" lengthAdjust="spacingAndGlyphs">R48</DimText>
    <DimText x="111" y="627" textLength="31" lengthAdjust="spacingAndGlyphs">R28</DimText>
    <DimText x="471" y="673" textLength="29" lengthAdjust="spacingAndGlyphs">100</DimText>
    <DimText x="641" y="527" textLength="21" lengthAdjust="spacingAndGlyphs">20</DimText>
    <DimText x="0" y="0" textLength="21" lengthAdjust="spacingAndGlyphs" transform="translate(714 408) rotate(64)">32</DimText>
    <DimText x="0" y="0" textLength="28" lengthAdjust="spacingAndGlyphs" transform="translate(602 447) rotate(-64)">64°</DimText>

    {/* construction circles */}
    <g stroke="#fff" strokeWidth="3">
      <circle cx="1315" cy="520.5" r="211" />
      <circle cx="1189" cy="690" r="211" />
      <circle cx="1088" cy="596.6" r="137.5" />
      <circle cx="1088" cy="597" r="75" />
      <path d="M1315.6 521.3L1351.4 596.4H1298" />
    </g>
    <g stroke="#1fbe1f" strokeWidth="1.2">
      <path d="M1035.3 365V745M845.4 555H1224.8" />
      <path d="M1028 547.5h15v15h-15z" />
    </g>

    {/* ucs */}
    <path d="M26 1026H71" stroke="#e6e8ea" strokeWidth="1.3" />
    <path d="M76 1012l12 14M88 1012l-12 14" stroke="#e6e8ea" strokeWidth="1.1" />
    <path d="M26 954l4 8v12M34 954l-4 8" stroke="#8f959c" strokeWidth="1.1" />
  </Drawing>
);

export default function App() {
  return (
    <>
      <GlobalStyle />
      <Shell>
        <TitleBar>
          <Logo>
            <LogoA>A</LogoA>
            <LogoCad>CAD</LogoCad>
          </Logo>
          <Quick $ml={10}><IDoc /></Quick>
          <Quick $ml={7}><IFolder /></Quick>
          <Quick $ml={7}><ISave /></Quick>
          <Quick $ml={7}><ISaveAs /></Quick>
          <Quick $ml={8}><IDocFolder /></Quick>
          <Quick $ml={10}><IPhone /></Quick>
          <Quick $ml={8}><IPrint /></Quick>
          <Quick $ml={8}><IUndo /><Caret $ml={6} /></Quick>
          <Quick $ml={7}><IRedo /><Caret $ml={7} $c="#6a727c" /></Quick>
          <Quick $ml={11}><ILines /></Quick>
          <Quick $ml={8}><IPlane /><ShareText>共享</ShareText></Quick>
          <AppTitle $ml={196}>Autodesk AutoCAD 2023</AppTitle>
          <AppTitle $ml={19}>G:\CAD2023 技巧图\技巧图\144.dwg</AppTitle>
          <SearchArrow $ml={195} />
          <SearchBox>键入关键字或短语</SearchBox>
          <Quick $ml={10}><ISearchBtn /></Quick>
          <Quick $ml={5}><IUser /></Quick>
          <Login>登录</Login>
          <Caret $ml={63} />
          <Quick $ml={15}><ICart /></Quick>
          <Quick $ml={11}><IAuto /></Quick>
          <Caret $ml={5} />
          <Sep $ml={10} />
          <Quick $ml={9}><IHelp /></Quick>
          <Caret $ml={6} />
          <Quick $ml={80}><IMin /></Quick>
          <Quick $ml={13}><IRestore /></Quick>
          <Quick $ml={12}><IClose /></Quick>
        </TitleBar>

        <MenuBar>
          {menus.map(([t, w]) => <MenuItem key={t} $w={w}>{t}</MenuItem>)}
          <DocControls><IMin /><IRestore /><IClose /></DocControls>
        </MenuBar>

        <TabStrip>
          <RibbonTab $active $w={44}>默认</RibbonTab>
          {ribbonTabs.map(([t, w]) => <RibbonTab key={t} $w={w}>{t}</RibbonTab>)}
          <MiniBox><CaretUp /></MiniBox>
          <TabCaret />
        </TabStrip>

        <Ribbon>
          <Panel $w={216}>
            <PanelBody>
              <Large w={42} ml={2} icon={ILine} label="直线" />
              <Large w={42} icon={IPline} label="多段线" />
              <Large w={40} icon={ICircleTool} label="圆" caret />
              <Large w={47} icon={IArcTool} label="圆弧" caret />
              <SmallCol $ml={2} $w={40}>
                <SmallRow $gap={7}><IconCell $w={21}><IRect /></IconCell><Caret /></SmallRow>
                <SmallRow $gap={7}><IconCell $w={21}><IEllipse /></IconCell><Caret /></SmallRow>
                <SmallRow $gap={7}><IconCell $w={21}><IHatch /></IconCell><Caret /></SmallRow>
              </SmallCol>
            </PanelBody>
            <Foot label="绘图" />
          </Panel>

          <Panel $w={235}>
            <PanelBody>
              <SmallCol $ml={6} $w={61}>
                <Tool icon={IMove} label="移动" />
                <Tool icon={ICopy} label="复制" />
                <Tool icon={IStretch} label="拉伸" />
              </SmallCol>
              <SmallCol $w={61}>
                <Tool icon={IRotate} label="旋转" />
                <Tool icon={IMirror} label="镜像" />
                <Tool icon={IScale} label="缩放" />
              </SmallCol>
              <SmallCol $w={76}>
                <Tool icon={ITrim} label="修剪" caret />
                <Tool icon={IFillet} label="圆角" caret />
                <Tool icon={IArray} label="阵列" caret />
              </SmallCol>
              <SmallCol>
                <SmallRow><IconCell $w={21}><IErase /></IconCell></SmallRow>
                <SmallRow><IconCell $w={21}><IExplode /></IconCell></SmallRow>
                <SmallRow><IconCell $w={21}><IOffset /></IconCell></SmallRow>
              </SmallCol>
            </PanelBody>
            <Foot label="修改" />
          </Panel>

          <Panel $w={160}>
            <PanelBody>
              <Large w={46} ml={4} icon={ITextA} label="文字" caret />
              <Large w={42} icon={IDim} label="标注" />
              <SmallCol $w={68}>
                <Tool icon={ILinear} label="线性" caret caretMl={6} />
                <Tool icon={ILeader} label="引线" caret caretMl={6} />
                <Tool icon={ITable} label="表格" />
              </SmallCol>
            </PanelBody>
            <Foot label="注释" />
          </Panel>

          <Panel $w={260}>
            <PanelBody>
              <Large w={44} icon={ILayers} lines={['图层', '特性']} />
              <SmallCol>
                <Combo $w={212} $mb={3}>
                  <IconCell $w={14}><IBulb /></IconCell>
                  <IconCell $w={23}><ISun /></IconCell>
                  <IconCell $w={18}><ILockOpen /></IconCell>
                  <Swatch $ml={5} />
                  <ComboText>粗实线</ComboText>
                  <Caret $s={4} />
                </Combo>
                <SmallRow $pl={1}>
                  <IconCell $w={25}><L1 /></IconCell>
                  <IconCell $w={25}><L2 /></IconCell>
                  <IconCell $w={25}><L3 /></IconCell>
                  <IconCell $w={25}><L4 /></IconCell>
                  <IconCell $w={25}><ICurrent /></IconCell>
                  <SmallLabel $ml={1}>置为当前</SmallLabel>
                </SmallRow>
                <SmallRow $pl={1}>
                  <IconCell $w={25}><L5 /></IconCell>
                  <IconCell $w={25}><L6 /></IconCell>
                  <IconCell $w={25}><L7 /></IconCell>
                  <IconCell $w={25}><L8 /></IconCell>
                  <IconCell $w={25}><IMatchLayer /></IconCell>
                  <SmallLabel $ml={1}>匹配图层</SmallLabel>
                </SmallRow>
              </SmallCol>
            </PanelBody>
            <Foot label="图层" />
          </Panel>

          <Panel $w={137}>
            <PanelBody>
              <Large w={44} icon={IInsert} label="插入" caret />
              <SmallCol>
                <Tool icon={IBlockNew} label="创建" />
                <Tool icon={IBlockEdit} label="编辑" />
                <Tool icon={IAttr} label="编辑属性" caret />
              </SmallCol>
            </PanelBody>
            <Foot label="块" />
          </Panel>

          <Panel $w={252}>
            <PanelBody>
              <Large w={44} icon={IMatch} lines={['特性', '匹配']} />
              <SmallCol>
                <SmallRow>
                  <IconCell $w={21}><IWheel /></IconCell>
                  <Combo $w={184}><Swatch $s={16} /><ComboText>ByLayer</ComboText><Caret $s={4} /></Combo>
                </SmallRow>
                <SmallRow>
                  <IconCell $w={21}><IWeight /></IconCell>
                  <Combo $w={184}><LineSample $t={3} /><ComboText $ml={3}>ByLayer</ComboText><Caret $s={4} /></Combo>
                </SmallRow>
                <SmallRow>
                  <IconCell $w={21}><IDash /></IconCell>
                  <Combo $w={184}><LineSample $t={1} /><ComboText $ml={3}>ByLayer</ComboText><Caret $s={4} /></Combo>
                </SmallRow>
              </SmallCol>
            </PanelBody>
            <PanelFoot>特性<Caret $s={4} $ml={7} $c="#cdd0d5" /><Launcher /></PanelFoot>
          </Panel>

          <Panel $w={70}>
            <PanelBody>
              <Large w={44} icon={IGroup} label="组" />
              <SmallCol>
                <SmallRow><IconCell $w={23}><IUngroup /></IconCell></SmallRow>
                <SmallRow><IconCell $w={23}><IGroupEdit /></IconCell></SmallRow>
                <SmallRow><IconCell $w={25} $h={24} $on><IGroupSel /></IconCell></SmallRow>
              </SmallCol>
            </PanelBody>
            <Foot label="组" />
          </Panel>

          <Panel $w={78}>
            <PanelBody>
              <Large w={52} icon={IRuler} label="测量" caret />
              <SmallCol>
                <SmallRow><IconCell $w={20}><IQuick /></IconCell></SmallRow>
                <SmallRow><IconCell $w={20}><ISelectAll /></IconCell></SmallRow>
                <SmallRow><IconCell $w={20}><ICalc /></IconCell></SmallRow>
              </SmallCol>
            </PanelBody>
            <Foot label="实用工具" />
          </Panel>

          <Panel $w={89}>
            <PanelBody>
              <Large w={52} icon={IPaste} label="粘贴" caret />
              <SmallCol $w={36}>
                <SmallRow $gap={5}><IconCell $w={21}><ICut /></IconCell><Caret /></SmallRow>
                <SmallRow $gap={5}><IconCell $w={21}><ICopyClip /></IconCell><Caret /></SmallRow>
              </SmallCol>
            </PanelBody>
            <PanelFoot>剪贴板</PanelFoot>
          </Panel>

          <Panel $last>
            <PanelBody>
              <Large w={64} icon={IBase} label="基点" caret />
            </PanelBody>
            <Foot label="视图" left pl={5}><Launcher $r={172} /></Foot>
          </Panel>
        </Ribbon>

        <DocTabs>
          <Slash $ml={10} />
          <DocLabel $ml={13}>开始</DocLabel>
          <ActiveDoc $w={73} $ml={8} $pl={17}>144*<CloseX>×</CloseX></ActiveDoc>
          <PlusMark $ml={10}>+</PlusMark>
          <Slash $ml={13} />
        </DocTabs>
        <Divider />

        <Canvas>
          <ViewLabel>[−][俯视][二维线框]</ViewLabel>
          <Sheet />
          <ProfileDrawing />
          <PhotoStrip />
          <Knob />
          <KnobMark width="12" height="14" viewBox="0 0 12 14" fill="none">
            <path d="M1 1l7 6-7 6" stroke="#c2c1b6" strokeWidth="2" />
          </KnobMark>
          <ViewCube><IViewCube /></ViewCube>
          <NavPill />
          <NavBar>
            <INavWheel />
            <NavCaret $c="#474e57" $m="6px 0" />
            <IHand />
            <IZoom />
            <NavCaret $c="#474e57" $m="2px 0 6px" />
            <IOrbit />
            <NavCaret $c="#474e57" $m="6px 0" />
            <IShow />
          </NavBar>
          <Subtitle>他说经过这个点必须与他相切对吧</Subtitle>
          <History>
            <HistoryLine $dim>CIRCLE</HistoryLine>
            <HistoryLine $dim>指定圆的圆心或 [三点(3P)/两点(2P)/切点、切点、半径(T)]:</HistoryLine>
            <HistoryLine $mb={0}>指定圆的半径或 [直径(D)] &lt;52.0000&gt;: 80</HistoryLine>
          </History>
          <CommandWrap>
            <CommandGrip>
              <IGrip />
              <ICmdClose />
              <IWrench />
            </CommandGrip>
            <CommandField>
              <ICmdBox />
              <Caret $ml={2} $c="#44484d" />
              <Hint>键入命令</Hint>
              <CaretUp />
            </CommandField>
          </CommandWrap>
        </Canvas>

        <Divider />
        <StatusBar>
          <LayoutTabs>
            <ModelTab>模型</ModelTab>
            <DocLabel $ml={13}>布局1</DocLabel>
            <Slash $ml={13} />
            <DocLabel $ml={13}>布局2</DocLabel>
            <Slash $ml={10} />
            <PlusMark $ml={16}>+</PlusMark>
            <Slash $ml={11} />
          </LayoutTabs>
          <StatusTools>
            <StatusGroup><StatusCell $w={30}>模型</StatusCell></StatusGroup>
            <StatusGroup>
              <StatusCell $w={20}><IGrid /></StatusCell>
              <StatusCell $w={30}><IDots /></StatusCell>
              <StatusCell $w={15}><Caret /></StatusCell>
            </StatusGroup>
            <StatusGroup>
              <StatusCell $w={26}><ILOrtho /></StatusCell>
              <StatusCell $on><IPolar /></StatusCell>
              <StatusCell $w={18}><Caret /></StatusCell>
              <StatusCell $w={20}><IIso /></StatusCell>
              <StatusCell $w={20}><Caret /></StatusCell>
            </StatusGroup>
            <StatusGroup>
              <StatusCell $on><IAngle /></StatusCell>
              <StatusCell $on $ml={2}><IOsnap /></StatusCell>
              <StatusCell $w={15}><Caret /></StatusCell>
            </StatusGroup>
            <StatusGroup>
              <StatusCell $on><ILW /></StatusCell>
            </StatusGroup>
            <StatusGroup>
              <StatusCell $w={24} $on><IAnno1 /></StatusCell>
              <StatusCell $w={28}><IAnno2 /></StatusCell>
              <StatusCell $w={20}><IAnno3 /></StatusCell>
              <StatusCell $w={22}>1:1</StatusCell>
              <StatusCell $w={15}><Caret /></StatusCell>
            </StatusGroup>
            <StatusGroup>
              <StatusCell $w={24}><IGear /></StatusCell>
              <StatusCell $w={14}><Caret /></StatusCell>
            </StatusGroup>
            <StatusGroup><StatusCell><IPlus /></StatusCell></StatusGroup>
            <StatusGroup><StatusCell><IIsolate /></StatusCell></StatusGroup>
            <StatusGroup><StatusCell><IInfo /></StatusCell></StatusGroup>
            <StatusGroup>
              <StatusCell $w={24}><IExpand /></StatusCell>
              <StatusCell $w={24}><IMenu /></StatusCell>
            </StatusGroup>
          </StatusTools>
        </StatusBar>
      </Shell>
    </>
  );
}
